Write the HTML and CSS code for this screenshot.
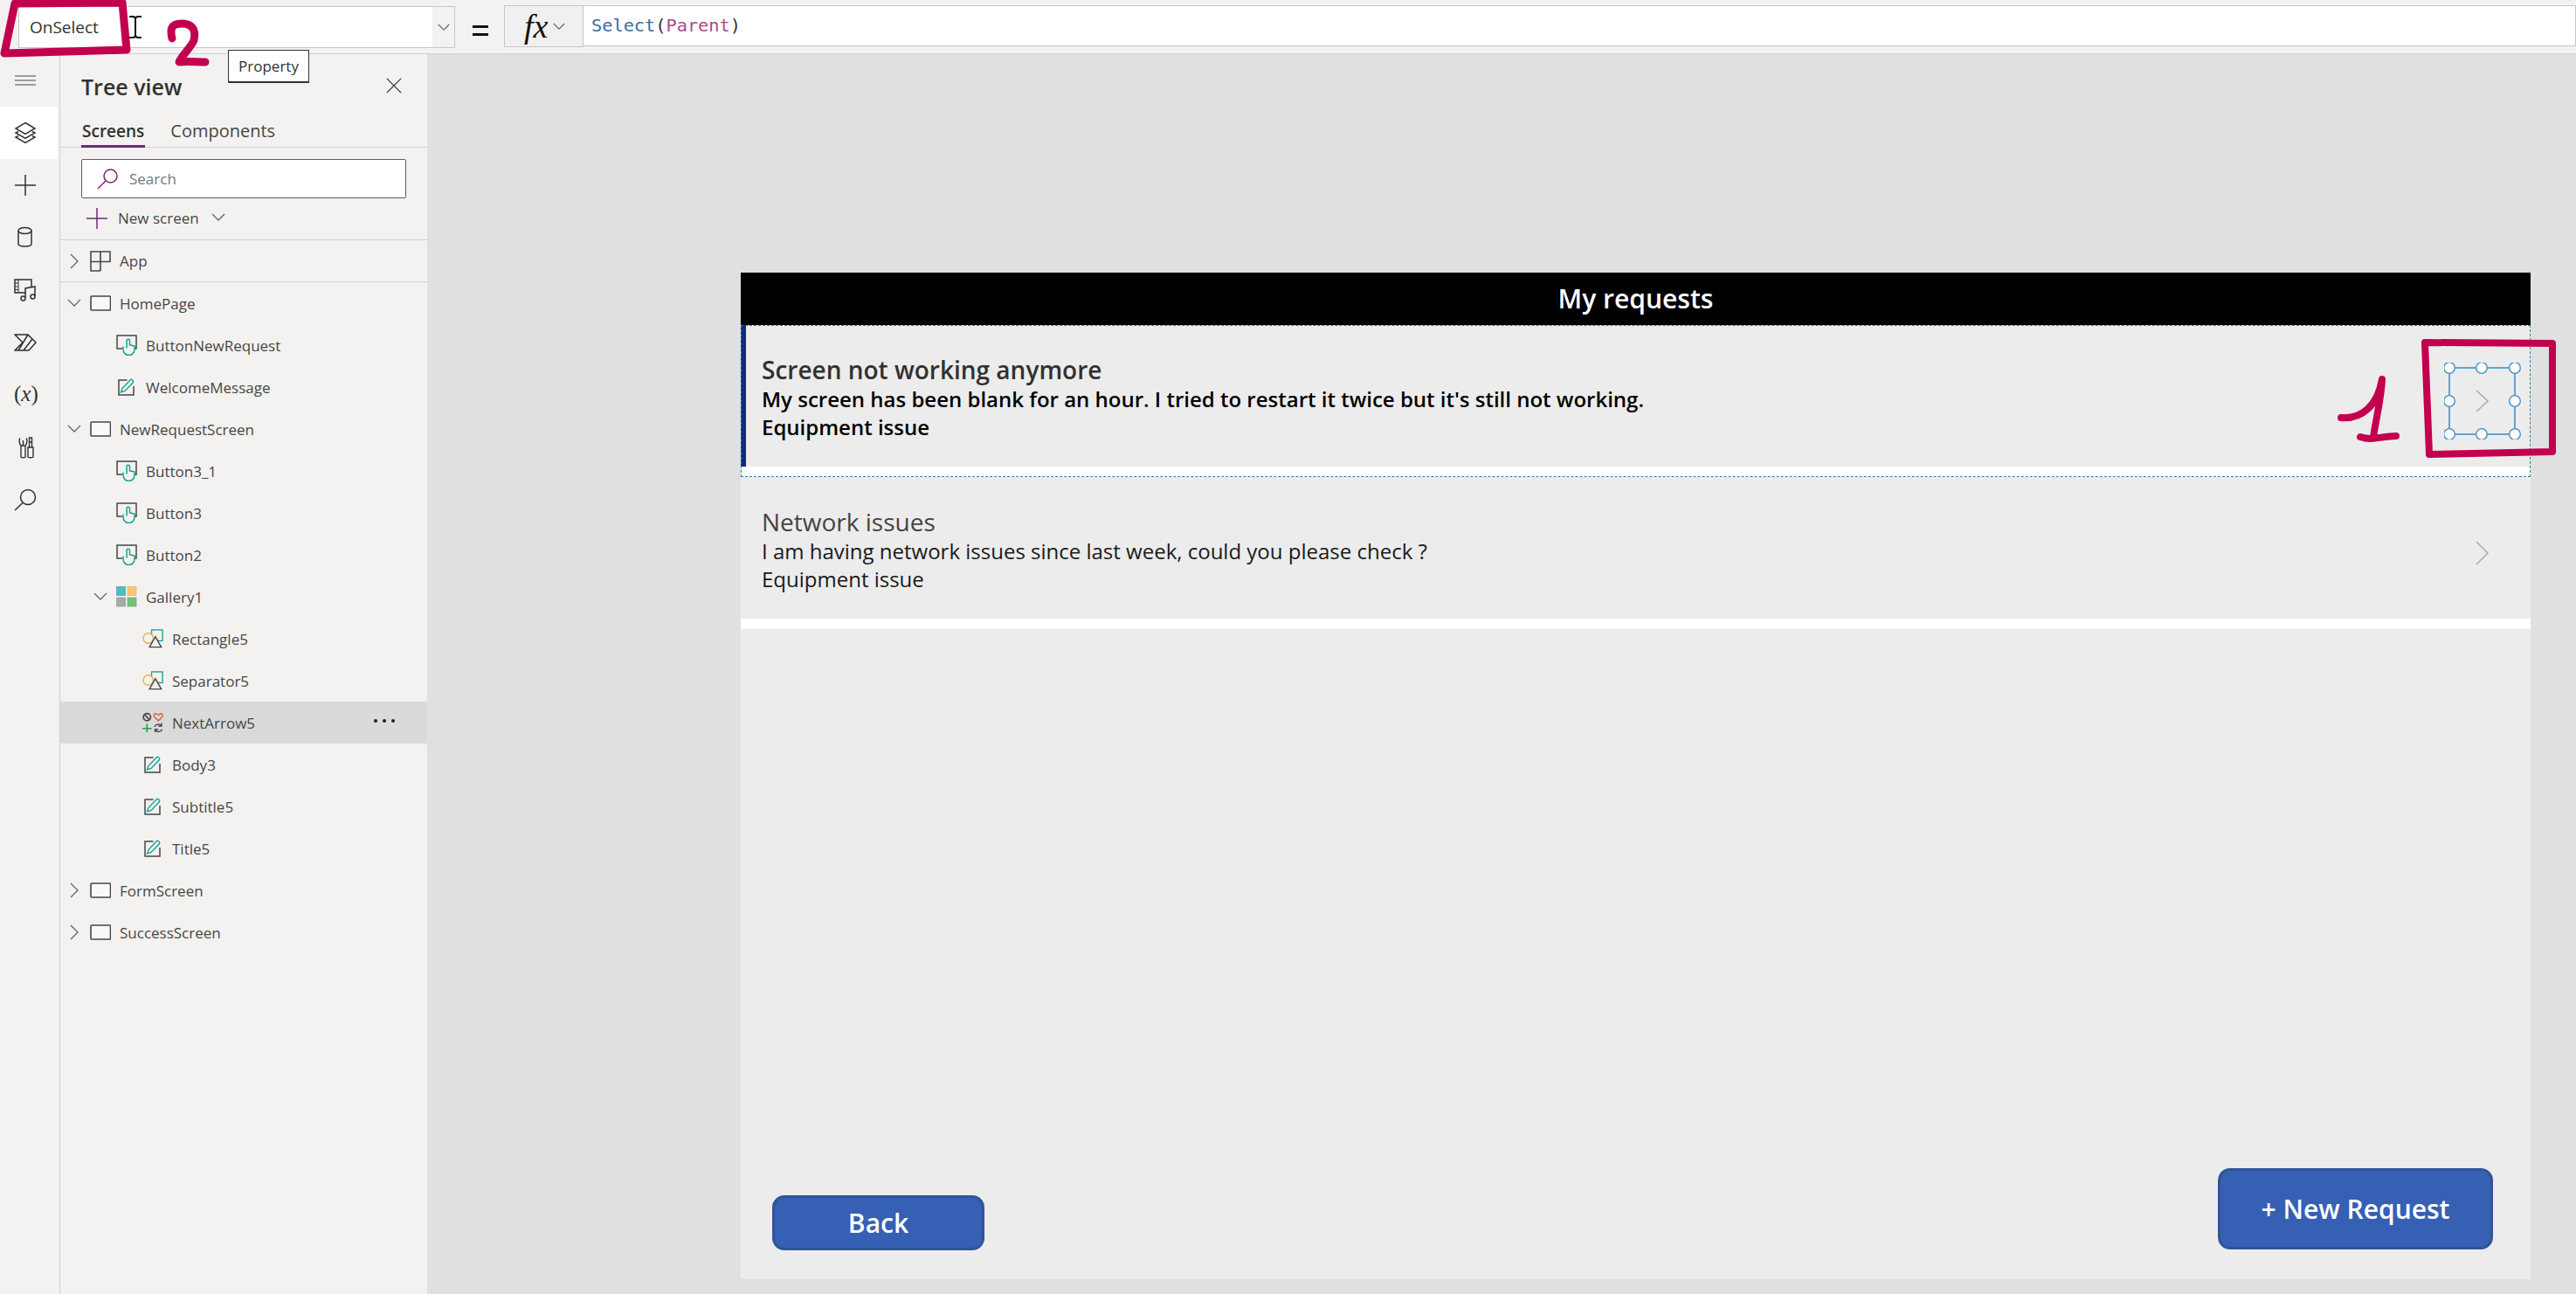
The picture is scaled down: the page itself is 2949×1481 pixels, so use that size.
FILE: index.html
```html
<!DOCTYPE html>
<html lang="en">
<head>
<meta charset="utf-8">
<title>Tree view</title>
<link rel="stylesheet" href="styles.css">
</head>
<body>
<svg class="defs" width="0" height="0" aria-hidden="true">
  <symbol id="chev-r" viewBox="0 0 12 20"><path d="M2 2l8 8-8 8" fill="none" stroke="#666" stroke-width="1.3"/></symbol>
  <symbol id="chev-d" viewBox="0 0 16 12"><path d="M1 2l7 7 7-7" fill="none" stroke="#666" stroke-width="1.3"/></symbol>
  <symbol id="i-screen" viewBox="0 0 24 18"><rect x="1" y="1" width="22.5" height="16" rx="1" fill="#faf9f8" stroke="#484644" stroke-width="1.6"/></symbol>
  <symbol id="i-app" viewBox="0 0 24 24"><path d="M1 1h22v11.500H1zM12 1v22M1 12v11h11" fill="none" stroke="#484644" stroke-width="1.6"/></symbol>
  <symbol id="i-button" viewBox="0 0 24 24"><path d="M7 16H1V1h22v15h-2" fill="none" stroke="#484644" stroke-width="1.5"/><path d="M8 13.500v3.500a6.500 6.500 0 0 0 13 0v-4l-5.500-1.200V7a1.700 1.700 0 0 0-3.400 0v8.500" fill="#f3f2f1" stroke="#12a594" stroke-width="1.5"/></symbol>
  <symbol id="i-text" viewBox="0 0 20 20"><path d="M10.500 2H1v17h17V9" fill="none" stroke="#484644" stroke-width="1.5"/><path d="M3.500 16l1.500-4.500L14.500 1.500c1-1 3.800 1.500 3 3L8 14.500z" fill="#f3f2f1" stroke="#12a594" stroke-width="1.4"/></symbol>
  <symbol id="i-gallery" viewBox="0 0 24 24"><rect x="0.500" y="0.500" width="10" height="10" fill="#4dbdc4" stroke="#3a9aa0" stroke-width=".6"/><rect x="13" y="0.500" width="10" height="10" fill="#fdc66e" stroke="#e5ab50" stroke-width=".6"/><rect x="0.500" y="13" width="10" height="10" fill="#a9a9a9" stroke="#8f8f8f" stroke-width=".6"/><rect x="13" y="13" width="10" height="10" fill="#72c27a" stroke="#5aa862" stroke-width=".6"/></symbol>
  <symbol id="i-shapes" viewBox="0 0 25 23"><rect x="11" y="1" width="13" height="13" fill="none" stroke="#12a594" stroke-width="1.4"/><circle cx="7" cy="11" r="6" fill="#f3f2f1" stroke="#f2b04f" stroke-width="1.5"/><path d="M8.500 21.500L15.500 9l7 12.500z" fill="#f3f2f1" stroke="#484644" stroke-width="1.5"/></symbol>
  <symbol id="i-icons" viewBox="0 0 25 24"><circle cx="5.500" cy="5.500" r="4.300" fill="none" stroke="#484644" stroke-width="1.700"/><path d="M2.500 2.500l6 6" stroke="#484644" stroke-width="1.700"/><path d="M19 10l-4.500-4.700c-2-2.300 .5-4.800 2.700-3.500l1.800 1.300 1.800-1.300c2.200-1.300 4.700 1.200 2.700 3.500z" fill="none" stroke="#e2583e" stroke-width="1.400"/><path d="M0 19h11M5.500 13.500v10" stroke="#2f9e44" stroke-width="1.700"/><path d="M14.500 17c1-3.200 6-3.800 8-1.200M23.500 20c-1 3.200-6 3.800-8 1.200M22.800 12.500v3.800h-3.800M15.200 23.500v-3.500H19" fill="none" stroke="#484644" stroke-width="1.500"/></symbol>
</svg>

<header class="topbar">
  <div class="prop-select">
    <span class="prop-value">OnSelect</span>
    <span class="prop-chevron"><svg class="chev-sm"><use href="#chev-d"/></svg></span>
  </div>
  <span class="equals"></span>
  <div class="fx-box"><span class="fx">fx</span><svg class="chev-sm"><use href="#chev-d"/></svg></div>
  <div class="formula"><span class="tok-fn">Select</span>(<span class="tok-arg">Parent</span>)</div>
</header>

<div class="workspace">
  <nav class="rail">
    <span class="rail-item"><svg class="rail-icon" viewBox="0 0 26 26"><path d="M1 8h24M1 13h24M1 18h24" fill="none" stroke="#484644" stroke-width="1.200"/></svg></span>
    <span class="rail-item active"><svg class="rail-icon" viewBox="0 0 26 26"><path d="M13 1.500l11 6.500-11 6.500L2 8z" fill="none" stroke="#323130" stroke-width="1.500"/><path d="M5 11.500L2 13l11 6.500L24 13l-3-1.500M5 16.500L2 18l11 6.500L24 18l-3-1.500" fill="none" stroke="#323130" stroke-width="1.500"/></svg></span>
    <span class="rail-item"><svg class="rail-icon" viewBox="0 0 26 26"><path d="M1 13h24M13 1v24" fill="none" stroke="#323130" stroke-width="1.500"/></svg></span>
    <span class="rail-item"><svg class="rail-icon" viewBox="0 0 26 26"><path d="M5 5v15c0 4 15 4 15 0V5" fill="none" stroke="#323130" stroke-width="1.500"/><ellipse cx="12.500" cy="5" rx="7.500" ry="3.500" fill="none" stroke="#323130" stroke-width="1.500"/></svg></span>
    <span class="rail-item"><svg class="rail-icon" viewBox="0 0 26 26"><path d="M14 16H1V1h19v8" fill="none" stroke="#323130" stroke-width="1.500"/><path d="M5 1v15M1 5h4M1 9h4M1 12.500h4" fill="none" stroke="#323130" stroke-width="1"/><path d="M13 22V11l11-2v11" fill="none" stroke="#323130" stroke-width="1.500"/><circle cx="10.500" cy="22.500" r="2.500" fill="none" stroke="#323130" stroke-width="1.500"/><circle cx="21.500" cy="20.500" r="2.500" fill="none" stroke="#323130" stroke-width="1.500"/></svg></span>
    <span class="rail-item"><svg class="rail-icon" viewBox="0 0 26 26"><path d="M1 4h15l9 9-8 9H1l9-9zM16 4L5 22M21 9L11 22" fill="none" stroke="#323130" stroke-width="1.500"/></svg></span>
    <span class="rail-item"><span class="rail-var">(<i>x</i>)</span></span>
    <span class="rail-item"><svg class="rail-icon" viewBox="0 0 26 26"><path d="M8 11V24c0 1 5 1 5 0V11M7 2.500C5.500 4 6 9 8 11h5c2-2 2.500-7 1-8.500M10.500 5v6" fill="none" stroke="#323130" stroke-width="1.400"/><path d="M16 24V13h6v11c0 1-6 1-6 0zM17.500 13V7h3v6M17.500 2h3v5h-3z" fill="none" stroke="#323130" stroke-width="1.400"/></svg></span>
    <span class="rail-item"><svg class="rail-icon" viewBox="0 0 26 26"><circle cx="16" cy="10" r="8.500" fill="none" stroke="#323130" stroke-width="1.500"/><path d="M10 16.500L1 25" fill="none" stroke="#323130" stroke-width="1.500"/></svg></span>
  </nav>

  <aside class="panel">
    <div class="panel-head">
      <h1 class="panel-title">Tree view</h1>
      <svg class="close" viewBox="0 0 20 20"><path d="M1 1l18 18M19 1L1 19" stroke="#323130" stroke-width="1.400"/></svg>
    </div>
    <div class="tabs">
      <span class="tab selected">Screens</span>
      <span class="tab">Components</span>
    </div>
    <div class="search-box">
      <svg class="search-icon" viewBox="0 0 25 25"><circle cx="15.500" cy="9.500" r="7.500" fill="none" stroke="#742774" stroke-width="1.500"/><path d="M10 15L1 24" stroke="#742774" stroke-width="1.500"/></svg>
      <span class="search-text">Search</span>
    </div>
    <div class="new-screen">
      <svg class="plus-icon" viewBox="0 0 24 24"><path d="M0 12h24M12 0v24" stroke="#742774" stroke-width="1.500"/></svg>
      <span>New screen</span>
      <svg class="new-chev"><use href="#chev-d"/></svg>
    </div>
    <div class="row app-row l0"><span class="slot"><svg class="chev-r"><use href="#chev-r"/></svg></span><svg class="ico"><use href="#i-app"/></svg><span>App</span></div>
    <div class="row l0"><span class="slot"><svg class="chev-d"><use href="#chev-d"/></svg></span><svg class="ico scr"><use href="#i-screen"/></svg><span>HomePage</span></div>
    <div class="row l1"><span class="slot"></span><svg class="ico"><use href="#i-button"/></svg><span>ButtonNewRequest</span></div>
    <div class="row l1"><span class="slot"></span><svg class="ico txt"><use href="#i-text"/></svg><span>WelcomeMessage</span></div>
    <div class="row l0"><span class="slot"><svg class="chev-d"><use href="#chev-d"/></svg></span><svg class="ico scr"><use href="#i-screen"/></svg><span>NewRequestScreen</span></div>
    <div class="row l1"><span class="slot"></span><svg class="ico"><use href="#i-button"/></svg><span>Button3_1</span></div>
    <div class="row l1"><span class="slot"></span><svg class="ico"><use href="#i-button"/></svg><span>Button3</span></div>
    <div class="row l1"><span class="slot"></span><svg class="ico"><use href="#i-button"/></svg><span>Button2</span></div>
    <div class="row l1"><span class="slot"><svg class="chev-d"><use href="#chev-d"/></svg></span><svg class="ico"><use href="#i-gallery"/></svg><span>Gallery1</span></div>
    <div class="row l2"><span class="slot"></span><svg class="ico"><use href="#i-shapes"/></svg><span>Rectangle5</span></div>
    <div class="row l2"><span class="slot"></span><svg class="ico"><use href="#i-shapes"/></svg><span>Separator5</span></div>
    <div class="row l2 current"><span class="slot"></span><svg class="ico"><use href="#i-icons"/></svg><span>NextArrow5</span><span class="more"><i></i><i></i><i></i></span></div>
    <div class="row l2"><span class="slot"></span><svg class="ico txt"><use href="#i-text"/></svg><span>Body3</span></div>
    <div class="row l2"><span class="slot"></span><svg class="ico txt"><use href="#i-text"/></svg><span>Subtitle5</span></div>
    <div class="row l2"><span class="slot"></span><svg class="ico txt"><use href="#i-text"/></svg><span>Title5</span></div>
    <div class="row l0"><span class="slot"><svg class="chev-r"><use href="#chev-r"/></svg></span><svg class="ico scr"><use href="#i-screen"/></svg><span>FormScreen</span></div>
    <div class="row l0"><span class="slot"><svg class="chev-r"><use href="#chev-r"/></svg></span><svg class="ico scr"><use href="#i-screen"/></svg><span>SuccessScreen</span></div>
  </aside>

  <main class="canvas">
    <section class="screen">
      <div class="screen-head">My requests</div>
      <div class="gallery">
        <article class="item first">
          <div class="item-title">Screen not working anymore</div>
          <div class="item-line">My screen has been blank for an hour. I tried to restart it twice but it's still not working.</div>
          <div class="item-line">Equipment issue</div>
          <svg class="next selected-arrow" viewBox="0 0 88 88">
            <path d="M1 1H76V77H1z" fill="none" stroke="#3a8ac4" stroke-width="1.500" transform="translate(5 5)"/>
            <circle cx="6" cy="6" r="6.300" class="h"/><circle cx="43" cy="6" r="6.300" class="h"/><circle cx="81" cy="6" r="6.300" class="h"/>
            <circle cx="6" cy="44" r="6.300" class="h"/><circle cx="81" cy="44" r="6.300" class="h"/>
            <circle cx="6" cy="82" r="6.300" class="h"/><circle cx="43" cy="82" r="6.300" class="h"/><circle cx="81" cy="82" r="6.300" class="h"/>
            <path d="M37 32l13 12-13 12" fill="none" stroke="#aaa" stroke-width="1.500"/>
          </svg>
        </article>
        <article class="item">
          <div class="item-title">Network issues</div>
          <div class="item-line">I am having network issues since last week, could you please check ?</div>
          <div class="item-line">Equipment issue</div>
          <svg class="next plain-arrow" viewBox="0 0 16 28"><path d="M2 1l13 13L2 27" fill="none" stroke="#aaa" stroke-width="1.500"/></svg>
        </article>
      </div>
      <div class="selection-box"></div>
      <div class="screen-foot">
        <button class="app-btn back">Back</button>
        <button class="app-btn new">+ New Request</button>
      </div>
    </section>
  </main>
</div>

<div class="tooltip">Property</div>

<svg class="ink" width="2949" height="1481" viewBox="0 0 2949 1481" aria-hidden="true">
  <g fill="none" stroke="#c2004f" stroke-linecap="round" stroke-linejoin="round">
    <path d="M17 4L140 3 145 57 5 61Z" stroke-width="9"/>
    <path d="M197 44C194 32 197 27 208 27 219 27 225 33 222 46 219 54 209 62 205 71 214 70 226 71 235 71" stroke-width="9"/>
    <path d="M2776 392L2922 393 2922 517 2781 520Z" stroke-width="8"/>
    <path d="M2680 478C2704 480 2722 464 2727 434 2726 456 2720 480 2717 500M2702 500C2716 505 2726 499 2743 499" stroke-width="8"/>
  </g>
  <path d="M148 19h4c2 0 3 1 3 3v18c0 2-1 3-3 3h-4M162 19h-4c-2 0-3 1-3 3M162 43h-4c-2 0-3-1-3-3" fill="none" stroke="#111" stroke-width="2"/>
</svg>
</body>
</html>
```
FILE: styles.css
```css
* { box-sizing: border-box; }
html, body { margin: 0; height: 100%; }
body {
  width: 2949px;
  height: 1481px;
  overflow: hidden;
  position: relative;
  font-family: "Open Sans", "Noto Sans", sans-serif;
  color: #323130;
  background: #e0e0e0;
}
.defs { position: absolute; }

/* top formula bar */
.topbar {
  height: 62px;
  display: flex;
  align-items: flex-start;
  padding: 6px 0 0 21px;
  background: #f3f2f1;
  border-bottom: 1px solid #d2d0ce;
}
.prop-select {
  width: 500px;
  height: 48px;
  margin-top: 1px;
  display: flex;
  align-items: center;
  background: #fff;
  border: 1px solid #c8c6c4;
}
.prop-value {
  flex: 1;
  padding-left: 12px;
  font-size: 19px;
  color: #323130;
}
.prop-chevron {
  width: 25px;
  height: 100%;
  display: flex;
  align-items: center;
  justify-content: center;
  background: #f3f2f1;
}
.chev-sm { width: 14px; height: 11px; }
.equals {
  width: 18px;
  height: 12px;
  margin: 23px 18px 0 20px;
  border-top: 3px solid #111;
  border-bottom: 3px solid #111;
}
.fx-box {
  width: 91px;
  height: 48px;
  display: flex;
  align-items: center;
  padding-left: 22px;
  gap: 6px;
  background: #f0f0f0;
  border: 1px solid #c8c6c4;
}
.fx {
  font-family: "Liberation Serif", serif;
  font-style: italic;
  font-size: 38px;
  line-height: 40px;
  color: #111;
}
.formula {
  flex: 1;
  height: 47px;
  padding-left: 9px;
  background: #fff;
  border: 1px solid #c8c6c4;
  border-left: 0;
  font-family: "DejaVu Sans Mono", monospace;
  font-size: 20.300px;
  line-height: 45px;
  color: #323130;
}
.tok-fn { color: #3a6ea5; }
.tok-arg { color: #a94c8c; }

/* workspace */
.workspace { display: flex; height: 1419px; }
.rail {
  width: 69px;
  flex: none;
  display: flex;
  flex-direction: column;
  background: #f3f2f1;
  border-right: 1px solid #d2d0ce;
}
.rail-item {
  height: 60px;
  width: 66px;
  padding-left: 16px;
  display: flex;
  align-items: center;
  color: #323130;
}
.rail-item.active { background: #fff; border-radius: 0 3px 3px 0; }
.rail-icon { width: 26px; height: 26px; }
.rail-var {
  font-family: "Liberation Serif", serif;
  font-size: 25px;
  line-height: 30px;
  margin-top: -3px;
  white-space: nowrap;
}

/* tree panel */
.panel {
  width: 420px;
  flex: none;
  background: #f3f2f1;
  font-size: 17px;
  color: #484644;
}
.panel-head {
  height: 72px;
  padding: 0 24px 0 24px;
  display: flex;
  align-items: center;
  justify-content: space-between;
}
.panel-title {
  margin: 0;
  padding-top: 2px;
  font-size: 25px;
  font-weight: 600;
  color: #323130;
}
.close { width: 18px; height: 18px; margin-right: 5px; }
.tabs {
  height: 35px;
  display: flex;
  gap: 28px;
  padding-left: 24px;
  border-bottom: 1.500px solid #d2d0ce;
}
.tab { height: 35px; font-size: 20px; line-height: 32px; padding: 0 1px; color: #484644; }
.tab.selected { font-size: 19px; font-weight: 600; color: #323130; border-bottom: 3px solid #742774; }
.search-box {
  height: 45px;
  margin: 13px 24px 0;
  padding-left: 17px;
  display: flex;
  align-items: center;
  gap: 12px;
  background: #fff;
  border: 1px solid #605e5c;
  border-radius: 2px;
}
.search-icon { width: 25px; height: 25px; }
.search-text { font-size: 17px; color: #777; }
.new-screen {
  height: 48px;
  padding: 0 0 2px 30px;
  display: flex;
  align-items: center;
  gap: 12px;
  font-size: 17px;
  border-bottom: 1.500px solid #d2d0ce;
}
.plus-icon { width: 24px; height: 24px; }
.new-chev { width: 16px; height: 12px; margin: -2px 0 0 2px; }
.row {
  height: 48px;
  display: flex;
  align-items: center;
  gap: 10px;
  white-space: nowrap;
}
.app-row { border-bottom: 1.500px solid #d2d0ce; }
.l0 { padding-left: 8px; }
.l1 { padding-left: 38px; }
.l2 { padding-left: 68px; }
.slot {
  width: 26px;
  flex: none;
  margin-right: -10px;
  display: flex;
  justify-content: center;
  padding-right: 10px;
}
.chev-r { width: 12px; height: 20px; }
.chev-d { width: 16px; height: 12px; }
.ico { width: 24px; height: 24px; flex: none; }
.ico.scr { height: 18px; }
.ico.txt { width: 20px; height: 20px; margin: 0 2px 0 2px; }
.row.current { background: #dadada; position: relative; }
.more {
  margin-left: auto;
  margin-right: 37px;
  margin-top: -4px;
  display: flex;
  gap: 6px;
}
.more i { width: 4px; height: 4px; border-radius: 50%; background: #201f1e; }

/* canvas */
.canvas {
  flex: 1;
  padding: 250px 52px 17px 359px;
  display: flex;
  background: #e0e0e0;
}
.screen {
  flex: 1;
  position: relative;
  display: flex;
  flex-direction: column;
  background: #ececec;
}
.screen-head {
  height: 60px;
  background: #000;
  color: #fff;
  font-size: 30px;
  font-weight: 600;
  line-height: 60px;
  text-align: center;
}
.gallery { display: flex; flex-direction: column; }
.item {
  position: relative;
  height: 174px;
  padding: 33px 0 0 24px;
  background: #ececec;
  border-bottom: 12px solid #fff;
  color: #000;
}
.item.first { box-shadow: inset 6px 0 0 #0f2a83; }
.item-title { font-size: 28px; line-height: 36px; color: #444; }
.item-line { font-size: 24px; line-height: 32px; color: #1a1a1a; }
.item.first .item-title { font-weight: 600; color: #323130; }
.item.first .item-line { font-weight: 600; color: #000; }
.next { position: absolute; }
.selected-arrow { width: 88px; height: 88px; left: 1950px; top: 43px; }
.h { fill: #fff; stroke: #3a8ac4; stroke-width: 1.300; }
.plain-arrow { width: 16px; height: 28px; right: 48px; top: 73px; }
.selection-box {
  position: absolute;
  left: 0;
  right: 0;
  top: 60px;
  height: 174px;
  border: 1px dashed #2f7fa8;
}
.screen-foot {
  margin-top: auto;
  padding: 0 43px 33px 36px;
  display: flex;
  justify-content: space-between;
  align-items: flex-end;
}
.app-btn {
  font-family: "Open Sans", sans-serif;
  font-size: 30px;
  font-weight: 600;
  color: #fff;
  background: #3660b3;
  border: 3px solid #2f5597;
  border-radius: 14px;
  padding: 0;
}
.app-btn.back { width: 243px; height: 63px; }
.app-btn.new { width: 315px; height: 93px; margin-bottom: 1px; }

/* overlays */
.tooltip {
  position: absolute;
  left: 261px;
  top: 57px;
  width: 93px;
  height: 38px;
  display: flex;
  align-items: center;
  justify-content: center;
  background: #fff;
  border: 1px solid #333;
  border-bottom-width: 2px;
  font-size: 17px;
  color: #323130;
}
.ink { position: absolute; left: 0; top: 0; pointer-events: none; }
```
